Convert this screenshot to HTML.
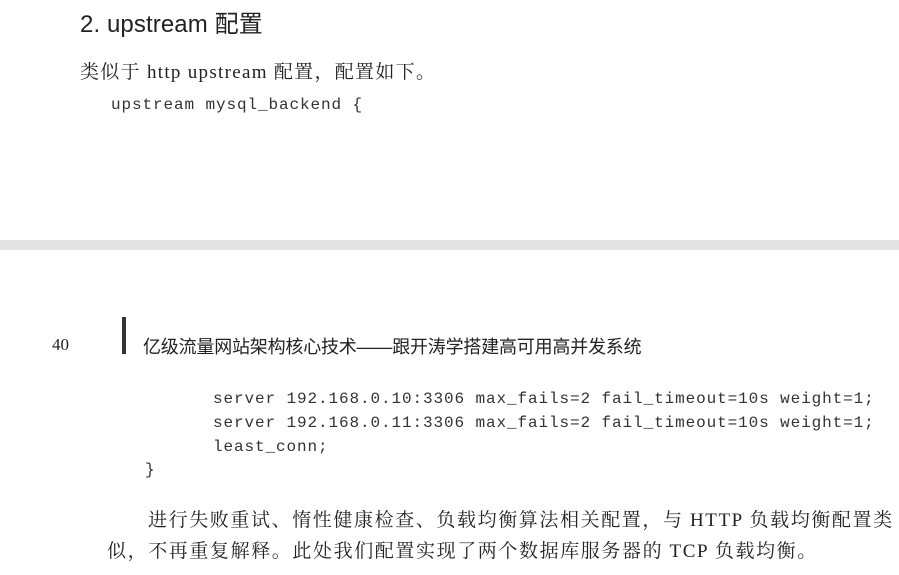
<!DOCTYPE html>
<html><head><meta charset="utf-8"><style>
html,body{margin:0;padding:0;background:#fff;}
body{width:899px;height:575px;position:relative;overflow:hidden;color:#222;}
.a{position:absolute;white-space:nowrap;}
.s{font-family:"Liberation Serif","Noto Serif CJK SC","Noto Sans CJK SC",serif;}
.h{font-family:"Liberation Sans","Noto Sans CJK SC",sans-serif;}
.m{font-family:"Liberation Mono",monospace;font-size:16px;letter-spacing:0.9px;color:#333;}
</style></head><body>
<div class="a h" style="left:80px;top:4px;font-size:24px;letter-spacing:0.1px;color:#222;">2. upstream 配置</div>
<div class="a s" style="left:80px;top:57px;font-size:19px;letter-spacing:1.3px;">类似于 http upstream 配置，配置如下。</div>
<div class="a m" style="left:111px;top:96px;">upstream mysql_backend {</div>
<div class="a" style="left:0;top:240px;width:899px;height:10px;background:#e4e4e4;"></div>
<div class="a s" style="left:52px;top:335px;font-size:17px;">40</div>
<div class="a" style="left:122px;top:317px;width:4px;height:37px;background:#333;"></div>
<div class="a h" style="left:143px;top:333px;font-size:18px;letter-spacing:-0.2px;color:#222;">亿级流量网站架构核心技术——跟开涛学搭建高可用高并发系统</div>
<div class="a m" style="left:213px;top:390px;">server 192.168.0.10:3306 max_fails=2 fail_timeout=10s weight=1;</div>
<div class="a m" style="left:213px;top:414px;">server 192.168.0.11:3306 max_fails=2 fail_timeout=10s weight=1;</div>
<div class="a m" style="left:213px;top:438px;">least_conn;</div>
<div class="a m" style="left:145px;top:461px;">}</div>
<div class="a s" style="left:148px;top:505px;font-size:19px;letter-spacing:1.6px;">进行失败重试、惰性健康检查、负载均衡算法相关配置，与 HTTP 负载均衡配置类</div>
<div class="a s" style="left:107px;top:536px;font-size:19px;letter-spacing:1.6px;">似，不再重复解释。此处我们配置实现了两个数据库服务器的 TCP 负载均衡。</div>
</body></html>
